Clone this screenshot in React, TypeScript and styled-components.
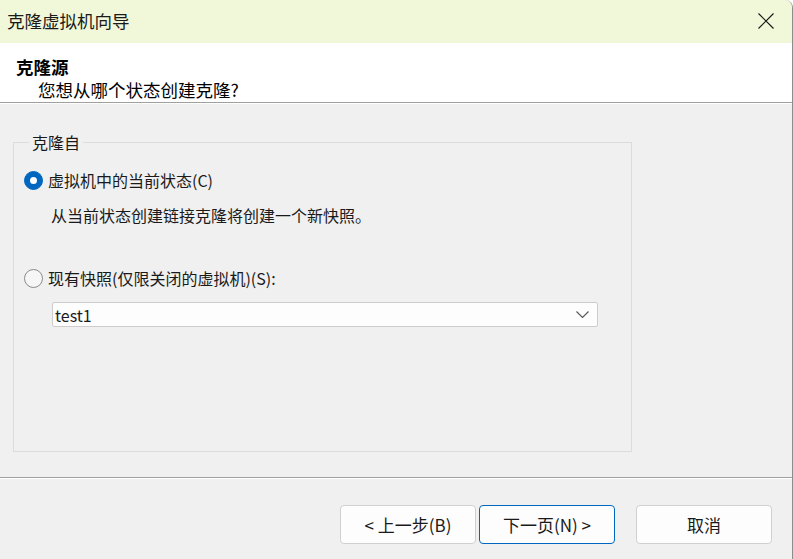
import React from "react";
import styled, { createGlobalStyle } from "styled-components";

const Global = createGlobalStyle`
  html, body { margin: 0; padding: 0; background: #ffffff; }
  body { font-family: "Noto Sans CJK SC", "Noto Sans", sans-serif; color: #1a1a1a; }
  * { box-sizing: border-box; }
`;

const Window = styled.div`
  width: 793px;
  height: 559px;
  display: flex;
  flex-direction: column;
  background: #f0f0f0;
  border-right: 1px solid #8c8c8c;
  border-top-right-radius: 8px;
  overflow: hidden;
`;

const TitleBar = styled.div`
  height: 43px;
  flex: none;
  display: flex;
  align-items: center;
  justify-content: space-between;
  background: #f1f8d9;
  padding-left: 7px;
`;

const TitleText = styled.div`
  font-size: 17.5px;
  line-height: 24px;
  color: #1a1a1a;
  padding-bottom: 2px;
`;

const CloseButton = styled.div`
  width: 50px;
  height: 43px;
  display: flex;
  align-items: center;
  justify-content: center;
  padding-bottom: 2px;
  margin-right: 1px;
`;

const Header = styled.div`
  height: 59px;
  flex: none;
  background: #ffffff;
  padding: 12px 0 0 16px;
`;

const HeaderTitle = styled.div`
  font-size: 17.5px;
  font-weight: 700;
  line-height: 23px;
  color: #000;
`;

const HeaderSub = styled.div`
  font-size: 17.5px;
  line-height: 23px;
  padding-left: 22px;
  color: #000;
`;

const Separator = styled.div`
  flex: none;
  height: 2px;
  border-top: 1px solid #a0a0a0;
  border-bottom: 1px solid #ffffff;
`;

const Body = styled.div`
  flex: 1;
  padding: 28px 0 0 13px;
`;

const GroupBox = styled.fieldset`
  margin: 0;
  width: 619px;
  height: 320px;
  border: 1px solid #dcdcdc;
  padding: 16px 0 0 10px;
  display: flex;
  flex-direction: column;
`;

const Legend = styled.legend`
  font-size: 16px;
  line-height: 20px;
  padding: 0 3px;
  margin-left: 5px;
  color: #1a1a1a;
`;

const RadioRow = styled.div<{ $top: number }>`
  display: flex;
  align-items: center;
  gap: 5px;
  height: 24px;
  margin-top: ${(p) => p.$top}px;
  font-size: 16px;
  color: #1a1a1a;
`;

const RadioCircle = styled.span<{ $checked?: boolean }>`
  width: 19px;
  height: 19px;
  border-radius: 50%;
  flex: none;
  display: flex;
  align-items: center;
  justify-content: center;
  background: ${(p) => (p.$checked ? "#0067c0" : "#f6f6f6")};
  border: 1px solid ${(p) => (p.$checked ? "#0067c0" : "#8a8a8a")};
  &::after {
    content: "";
    display: ${(p) => (p.$checked ? "block" : "none")};
    width: 7px;
    height: 7px;
    border-radius: 50%;
    background: #ffffff;
  }
`;

const Description = styled.div`
  margin: 12px 0 0 27px;
  font-size: 16px;
  line-height: 22px;
  color: #1a1a1a;
`;

const Select = styled.div`
  margin: 12px 0 0 28px;
  width: 546px;
  height: 25px;
  background: #fdfdfd;
  border: 1px solid #cdcdcd;
  border-radius: 2px;
  display: flex;
  align-items: center;
  justify-content: space-between;
  padding: 0 8px 0 2px;
  font-size: 16px;
  color: #1a1a1a;
`;

const Footer = styled.div`
  flex: none;
  height: 80px;
  display: flex;
  justify-content: flex-end;
  align-items: flex-start;
  padding: 26px 20px 0 0;
`;

const Button = styled.div<{ $primary?: boolean; $gap?: number }>`
  width: 136px;
  height: 39px;
  margin-left: ${(p) => p.$gap ?? 0}px;
  display: flex;
  align-items: center;
  justify-content: center;
  background: #fdfdfd;
  border: 1px solid ${(p) => (p.$primary ? "#0067c0" : "#d0d0d0")};
  border-radius: 4px;
  font-size: 17px;
  color: #1a1a1a;
`;

export default function App() {
  return (
    <>
      <Global />
      <Window>
        <TitleBar>
          <TitleText>克隆虚拟机向导</TitleText>
          <CloseButton>
            <svg width="16" height="16" viewBox="0 0 16 16">
              <path d="M0.5 0.5 L15.5 15.5 M15.5 0.5 L0.5 15.5" stroke="#1a1a1a" strokeWidth="1.2" fill="none" />
            </svg>
          </CloseButton>
        </TitleBar>
        <Header>
          <HeaderTitle>克隆源</HeaderTitle>
          <HeaderSub>您想从哪个状态创建克隆?</HeaderSub>
        </Header>
        <Separator />
        <Body>
          <GroupBox>
            <Legend>克隆自</Legend>
            <RadioRow $top={0}>
              <RadioCircle $checked />
              <span>虚拟机中的当前状态(C)</span>
            </RadioRow>
            <Description>从当前状态创建链接克隆将创建一个新快照。</Description>
            <RadioRow $top={40}>
              <RadioCircle />
              <span>现有快照(仅限关闭的虚拟机)(S):</span>
            </RadioRow>
            <Select>
              <span>test1</span>
              <svg width="13" height="7" viewBox="0 0 13 7">
                <path d="M0.5 0.5 L6.5 6.5 L12.5 0.5" stroke="#555" strokeWidth="1.1" fill="none" />
              </svg>
            </Select>
          </GroupBox>
        </Body>
        <Separator />
        <Footer>
          <Button>&lt; 上一步(B)</Button>
          <Button $primary $gap={3}>下一页(N) &gt;</Button>
          <Button $gap={21}>取消</Button>
        </Footer>
      </Window>
    </>
  );
}
